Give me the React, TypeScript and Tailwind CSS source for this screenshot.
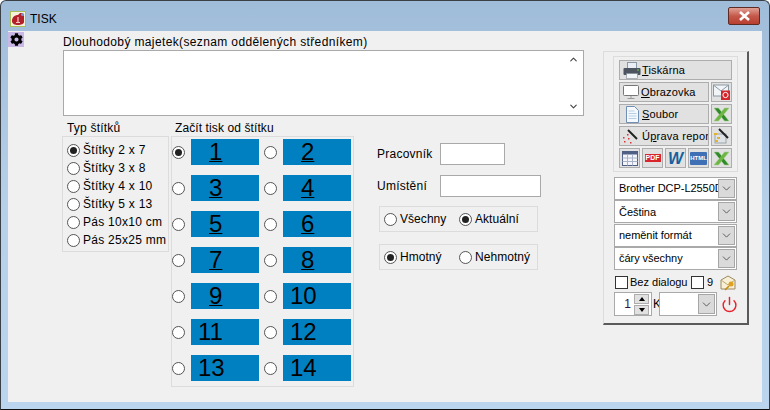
import { FaCog } from 'react-icons/fa';
import { Power, ChevronDown, ChevronUp } from 'lucide-react';

const font = "font-['Liberation_Sans',Arial,sans-serif]";

function Radio({ on }: { on?: boolean }) {
  return (
    <span className="w-[13px] h-[13px] shrink-0 rounded-full border border-[#555] bg-white flex items-center justify-center">
      {on && <span className="w-[7px] h-[7px] rounded-full bg-[#222]" />}
    </span>
  );
}

function Check() {
  return <span className="w-[13px] h-[13px] shrink-0 border border-[#333] bg-white" />;
}

function Tile({ n }: { n: number }) {
  return (
    <div className="flex items-center h-[26px]">
      <Radio on={n === 1} />
      <div
        className={`ml-[6px] w-[68px] h-[26px] bg-[#0080c0] text-black text-[24px] leading-[26px] ${
          n < 10 ? 'pl-[18px]' : 'pl-[7px]'
        }`}
      >
        <span className={n < 10 ? 'underline underline-offset-[1px] decoration-1' : ''}>{n}</span>
      </div>
    </div>
  );
}

function ExcelIcon() {
  return (
    <svg width="17" height="15" viewBox="0 0 17 15">
      <path d="M1 1h4.5L16 14h-4.5z" fill="#2f8a2c" />
      <path d="M11.5 1H16L5.5 14H1z" fill="#6db545" />
      <path d="M1 1h4.5l3 3.7L11.5 1H16l-5 6.5L16 14h-4.5l-3-3.7-3 3.7H1l5-6.5z" fill="none" stroke="#a7cf8f" strokeWidth="0.6" />
    </svg>
  );
}

function ToolBtn({ className, children }: { className?: string; children: React.ReactNode }) {
  return (
    <div className={`h-[20px] bg-[#e1e1e1] border border-[#adadad] flex items-center justify-center overflow-hidden ${className ?? ''}`}>
      {children}
    </div>
  );
}

function Select({ text }: { text: string }) {
  return (
    <div className="h-[23px] w-[123px] bg-white border border-[#a9a9a9] flex items-center pl-[4px] pr-[1px]">
      <span className="flex-1 overflow-hidden whitespace-nowrap text-[11px] tracking-[-0.05px]">{text}</span>
      <span className="w-[17px] h-[19px] shrink-0 bg-[#dadada] border border-[#a6a6a6] flex items-center justify-center">
        <ChevronDown size={13} strokeWidth={1.5} className="text-[#444]" />
      </span>
    </div>
  );
}

export default function App() {
  return (
    <div className={`${font} w-[770px] h-[410px] flex flex-col overflow-hidden rounded-t-[6px] border border-[#3a4046] border-b-[#111] bg-gradient-to-b from-[#9fbcd9] via-[#b7d0ea] to-[#bcd5ef] text-black text-[12px]`}>
      {/* Title bar */}
      <div className="h-[30px] shrink-0 flex items-center pl-[9px] pr-[9px] pt-[6px]">
        <svg width="16" height="16" viewBox="0 0 16 16" className="shrink-0">
          <rect x="0.5" y="0.5" width="15" height="15" fill="#f4f4dc" stroke="#a7bf5a" />
          <path d="M2 10c0-4 3-6 6-6l2-2h3l1 3v6c0 2-3 3-6 3s-6-1-6-4z" fill="#b3202a" />
          <path d="M8 6v5M6 11.5h4" stroke="#f4c8c8" strokeWidth="1.2" />
          <circle cx="12.5" cy="3.5" r="1.5" fill="#7d95cf" />
        </svg>
        <span className="ml-[4px] text-[12px]">TISK</span>
        <div className="ml-auto mb-[6px] w-[32px] h-[18px] rounded-[2px] border border-[#5e2a24] bg-gradient-to-b from-[#e0a196] via-[#c4584a] to-[#b83f30] flex items-center justify-center">
          <svg width="13" height="10" viewBox="0 0 13 10">
            <path d="M2 1l9 8M11 1l-9 8" stroke="#fff" strokeWidth="2.6" />
          </svg>
        </div>
      </div>

      {/* Client area */}
      <div className="mx-[7px] h-[371px] bg-[#f0f0f0] flex relative">
        <div className="w-[55px] shrink-0 pt-[1px]">
          <div className="w-[16px] h-[15px] bg-[#c9b8e6] flex items-center justify-center">
            <FaCog size={13} className="text-black" />
          </div>
        </div>

        <div className="w-[522px] shrink-0 pt-[4px]">
          <div className="h-[15px] leading-[15px] tracking-[0.37px] whitespace-nowrap">
            Dlouhodobý majetek(seznam oddělených středníkem)
          </div>
          <div className="h-[66px] w-[521px] bg-white border border-[#a9a9a9] flex justify-end">
            <div className="w-[18px] pr-[1px] flex flex-col items-center justify-between py-[3px] text-[#444]">
              <ChevronUp size={11} strokeWidth={2.4} />
              <ChevronDown size={11} strokeWidth={2.4} />
            </div>
          </div>

          <div className="flex mt-[5px] -ml-[1px]">
            {/* Typ stitku */}
            <div className="w-[107px] shrink-0">
              <div className="pl-[5px] h-[15px] leading-[14px] tracking-[0.2px]">Typ štítků</div>
              <div className="h-[116px] border border-[#dcdcdc] pl-[4px] pt-[4px] flex flex-col">
                {['Štítky 2 x 7', 'Štítky 3 x 8', 'Štítky 4 x 10', 'Štítky 5 x 13', 'Pás 10x10 cm', 'Pás 25x25 mm'].map((t, i) => (
                  <div key={t} className="h-[18px] flex items-center gap-[3px] whitespace-nowrap tracking-[0.27px]">
                    <Radio on={i === 0} />
                    {t}
                  </div>
                ))}
              </div>
            </div>

            {/* Zacit tisk */}
            <div className="w-[183px] shrink-0 ml-[2px]">
              <div className="pl-[4px] h-[15px] leading-[14px] tracking-[0.1px]">Začít tisk od štítku</div>
              <div className="h-[251px] border border-[#dcdcdc] pt-[2px] grid grid-cols-[92px_89px] auto-rows-[26px] gap-y-[10px]">
                {Array.from({ length: 14 }, (_, i) => (
                  <Tile key={i} n={i + 1} />
                ))}
              </div>
            </div>

            {/* Pracovnik */}
            <div className="ml-[23px] w-[164px] shrink-0 pt-[22px]">
              <div className="flex items-center h-[22px] tracking-[0.25px]">
                <span className="w-[63px]">Pracovník</span>
                <div className="w-[65px] h-[22px] bg-white border border-[#a9a9a9]" />
              </div>
              <div className="flex items-center h-[22px] mt-[10px] tracking-[0.25px]">
                <span className="w-[63px]">Umístění</span>
                <div className="w-[101px] h-[22px] bg-white border border-[#a9a9a9]" />
              </div>
              <div className="ml-[2px] mt-[9px] w-[159px] h-[26px] border border-[#dcdcdc] flex items-center pl-[4px] tracking-[0.05px]">
                <span className="flex items-center gap-[3px] w-[75px]"><Radio />Všechny</span>
                <span className="flex items-center gap-[3px]"><Radio on />Aktuální</span>
              </div>
              <div className="ml-[2px] mt-[12px] w-[159px] h-[26px] border border-[#dcdcdc] flex items-center pl-[4px] tracking-[0.05px]">
                <span className="flex items-center gap-[3px] w-[75px]"><Radio on />Hmotný</span>
                <span className="flex items-center gap-[3px]"><Radio />Nehmotný</span>
              </div>
            </div>
          </div>
        </div>

        {/* Right panel */}
        <div className="ml-[18px] mt-[20px] w-[146px] h-[274px] border border-[#dcdcdc] border-r-2 border-r-[#5a5a5a] border-b-2 border-b-[#5a5a5a] flex flex-col items-center pt-[4px]">
          <div className="w-[125px] h-[116px] border border-[#dcdcdc] pl-[5px] pt-[3px] flex flex-col gap-[2px] text-[11px] tracking-[0.15px]">
            <ToolBtn className="w-[113px] !justify-start pl-[3px] gap-[1px]">
              <svg width="18" height="17" viewBox="0 0 18 17" className="shrink-0">
                <rect x="4.5" y="0.5" width="9" height="7" fill="#e8eef4" stroke="#8a97a4" />
                <rect x="0.5" y="6" width="17" height="7" rx="1" fill="#4c5560" />
                <rect x="3.5" y="11.5" width="11" height="5" fill="#f3f6f9" stroke="#7f8a96" strokeWidth="0.6" />
                <rect x="14" y="7.5" width="2" height="1" fill="#6fd04f" />
              </svg>
              <span><span className="underline">T</span>iskárna</span>
            </ToolBtn>
            <div className="flex gap-[2px]">
              <ToolBtn className="w-[90px] !justify-start pl-[3px] gap-[2px]">
                <svg width="16" height="15" viewBox="0 0 16 15" className="shrink-0">
                  <rect x="0.5" y="0.5" width="15" height="10" rx="1" fill="#fff" stroke="#777" />
                  <path d="M8 11v2M4.5 13.5h7" stroke="#999" />
                </svg>
                <span><span className="underline">O</span>brazovka</span>
              </ToolBtn>
              <ToolBtn className="w-[21px]">
                <svg width="17" height="16" viewBox="0 0 17 16">
                  <rect x="0.5" y="1" width="15" height="11" fill="#f2f5f8" stroke="#8b98a4" />
                  <path d="M1 1.5l7 5.5 7-5.5" fill="none" stroke="#8b98a4" />
                  <rect x="8" y="6.5" width="9" height="9.5" fill="#d3262c" />
                  <circle cx="12.5" cy="11" r="2.6" fill="none" stroke="#fff" />
                </svg>
              </ToolBtn>
            </div>
            <div className="flex gap-[2px]">
              <ToolBtn className="w-[90px] !justify-start pl-[6px] gap-[3px]">
                <svg width="13" height="17" viewBox="0 0 13 17" className="shrink-0">
                  <path d="M0.5 0.5h8l4 4v12h-12z" fill="#f5f9fd" stroke="#6f8fb5" />
                  <path d="M2.5 5h6M2.5 7.5h8M2.5 10h8M2.5 12.5h8" stroke="#b7cde4" />
                </svg>
                <span><span className="underline">S</span>oubor</span>
              </ToolBtn>
              <ToolBtn className="w-[21px]"><ExcelIcon /></ToolBtn>
            </div>
            <div className="flex gap-[2px]">
              <ToolBtn className="w-[90px] !justify-start pl-[2px] gap-[3px]">
                <svg width="17" height="16" viewBox="0 0 17 16" className="shrink-0">
                  <path d="M6 2l9 9" stroke="#222" strokeWidth="2" />
                  <g fill="#d8343a">
                    <rect x="5" y="6" width="1.5" height="1.5" /><rect x="1" y="9" width="1.5" height="1.5" />
                    <rect x="6" y="10" width="1.5" height="1.5" /><rect x="2" y="13" width="1.5" height="1.5" />
                    <rect x="8" y="14" width="1.5" height="1.5" />
                  </g>
                </svg>
                <span className="whitespace-nowrap tracking-[0.25px]">Ú<span className="underline">p</span>rava repor</span>
              </ToolBtn>
              <ToolBtn className="w-[21px]">
                <svg width="17" height="16" viewBox="0 0 17 16">
                  <rect x="2" y="6" width="11" height="9" fill="#dfe3e8" stroke="#9aa3ad" />
                  <path d="M6 1l9 9" stroke="#222" strokeWidth="2" />
                  <g fill="#e2b22c">
                    <rect x="1" y="5" width="3" height="2" /><rect x="4" y="9" width="3" height="2" /><rect x="2" y="12" width="3" height="2" />
                  </g>
                </svg>
              </ToolBtn>
            </div>
            <div className="flex gap-[2px]">
              <ToolBtn className="w-[21px]">
                <svg width="16" height="15" viewBox="0 0 16 15">
                  <rect x="0.5" y="0.5" width="15" height="14" fill="#f4f5fa" stroke="#4f5f85" />
                  <rect x="0.5" y="0.5" width="15" height="3" fill="#4f5f85" />
                  <path d="M5.5 3.5v11M10.5 3.5v11M0.5 7h15M0.5 10.5h15" stroke="#aab2c8" />
                </svg>
              </ToolBtn>
              <ToolBtn className="w-[21px]">
                <span className="w-[16px] h-[8px] bg-[#d8262c] text-white text-[7px] leading-[8px] font-bold text-center tracking-normal">PDF</span>
              </ToolBtn>
              <ToolBtn className="w-[21px]">
                <span className="text-[#14609e] text-[16px] leading-[15px] font-bold italic tracking-normal">W</span>
              </ToolBtn>
              <ToolBtn className="w-[21px]">
                <span className="w-[17px] h-[13px] rounded-[1px] bg-[#3f6fb5] text-white text-[6px] leading-[13px] font-bold text-center tracking-normal">HTML</span>
              </ToolBtn>
              <ToolBtn className="w-[21px]"><ExcelIcon /></ToolBtn>
            </div>
          </div>

          <div className="mt-[5px] flex flex-col gap-[0.4px]">
            <Select text="Brother DCP-L2550D" />
            <Select text="Čeština" />
            <Select text="neměnit formát" />
            <Select text="čáry všechny" />
          </div>

          <div className="w-full mt-[4px] pl-[11px] h-[17px] flex items-center text-[11px]">
            <Check />
            <span className="ml-[2px] w-[61px] whitespace-nowrap">Bez dialogu</span>
            <Check />
            <span className="ml-[3px] w-[6px]">9</span>
            <svg width="16" height="16" viewBox="0 0 16 16" className="ml-[7px]">
              <path d="M1 5l7-4 7 4v9H1z" fill="#f7efd6" stroke="#9a8a60" />
              <path d="M1 5l7 5 7-5" fill="none" stroke="#b8a878" />
              <circle cx="11" cy="9" r="2.5" fill="#e0a020" />
              <path d="M9 11l-4 4" stroke="#c88a10" strokeWidth="1.6" />
            </svg>
          </div>

          <div className="w-full mt-[1px] pl-[10px] flex items-center">
            <div className="w-[38px] h-[24px] bg-white border border-[#a9a9a9] flex items-center">
              <span className="w-[19px] pr-[3px] text-right text-[#3a1040]">1</span>
              <div className="w-[15px] flex flex-col gap-[1px]">
                <span className="h-[10px] bg-[#e1e1e1] border border-[#adadad] flex items-center justify-center">
                  <span className="border-x-[3px] border-x-transparent border-b-[4px] border-b-black" />
                </span>
                <span className="h-[10px] bg-[#e1e1e1] border border-[#adadad] flex items-center justify-center">
                  <span className="border-x-[3px] border-x-transparent border-t-[4px] border-t-black" />
                </span>
              </div>
            </div>
            <span className="ml-[1px] w-[6px]">K</span>
            <div className="w-[58px] h-[24px] bg-white border border-[#a9a9a9] flex items-center justify-end pr-[1px]">
              <span className="w-[17px] h-[20px] bg-[#dadada] border border-[#a6a6a6] flex items-center justify-center">
                <ChevronDown size={13} strokeWidth={1.5} className="text-[#444]" />
              </span>
            </div>
            <Power size={17} strokeWidth={2} className="ml-[4px] text-[#e8222a]" />
          </div>
        </div>
      </div>
    </div>
  );
}
